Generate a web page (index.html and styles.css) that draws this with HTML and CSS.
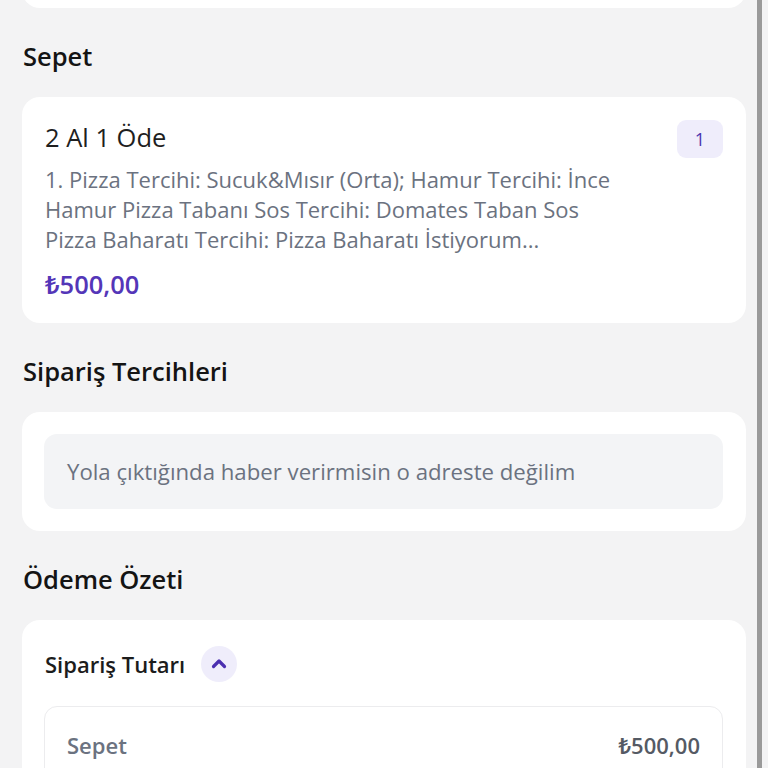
FILE: index.html
```html
<!DOCTYPE html>
<html lang="tr">
<head>
<meta charset="utf-8">
<link rel="stylesheet" href="styles.css">
</head>
<body>
<div class="page">
  <div class="card card-prev"></div>

  <h2 class="section-title">Sepet</h2>
  <div class="card cart-item">
    <div class="item-main">
      <div class="item-title">2 Al 1 Öde</div>
      <div class="item-desc">1. Pizza Tercihi: Sucuk&amp;Mısır (Orta); Hamur Tercihi: İnce Hamur Pizza Tabanı Sos Tercihi: Domates Taban Sos Pizza Baharatı Tercihi: Pizza Baharatı İstiyorum...</div>
      <div class="item-price">₺500,00</div>
    </div>
    <div class="qty-badge">1</div>
  </div>

  <h2 class="section-title">Sipariş Tercihleri</h2>
  <div class="card prefs">
    <div class="note-box">Yola çıktığında haber verirmisin o adreste değilim</div>
  </div>

  <h2 class="section-title">Ödeme Özeti</h2>
  <div class="card summary">
    <div class="summary-head">
      <span class="summary-label">Sipariş Tutarı</span>
      <span class="toggle">
        <svg width="18" height="18" viewBox="0 0 18 18"><path d="M3.5 11.5 L9 6 L14.5 11.5" fill="none" stroke="#4b2fb0" stroke-width="3.2" stroke-linecap="round" stroke-linejoin="round"/></svg>
      </span>
    </div>
    <div class="summary-box">
      <div class="summary-row">
        <span class="row-label">Sepet</span>
        <span class="row-value">₺500,00</span>
      </div>
    </div>
  </div>
</div>
<div class="scroll-edge"></div>
</body>
</html>
```
FILE: styles.css
```css
* { box-sizing: border-box; }
html, body {
  margin: 0;
  padding: 0;
  background: #f3f3f4;
  font-family: "Open Sans", "Noto Sans", sans-serif;
  color: #1c1c1c;
  overflow: hidden;
}
.page {
  padding: 1px 22px 40px;
}
.card {
  background: #ffffff;
  border-radius: 18px;
}
.card-prev {
  height: 48px;
  margin-top: -41px;
}
.section-title {
  margin: 32px 0 25px 1px;
  font-size: 25.5px;
  line-height: 32px;
  font-weight: 600;
  color: #141414;
}
.cart-item {
  display: flex;
  align-items: flex-start;
  gap: 50px;
  padding: 22px 23px 24px 23px;
}
.item-main {
  flex: 1;
  min-width: 0;
}
.item-title {
  font-size: 25.5px;
  line-height: 36px;
  color: #1f1f1f;
}
.item-desc {
  margin-top: 9px;
  font-size: 22px;
  line-height: 30px;
  color: #6b7280;
}
.item-price {
  margin-top: 15px;
  font-size: 25.5px;
  line-height: 30px;
  font-weight: 600;
  color: #5436b8;
}
.qty-badge {
  width: 46px;
  height: 38px;
  margin-top: 1px;
  border-radius: 9px;
  background: #efedfb;
  color: #4b34b0;
  font-size: 18px;
  font-weight: 500;
  display: flex;
  align-items: center;
  justify-content: center;
}
.prefs {
  padding: 22px 23px 22px 22px;
}
.note-box {
  height: 75px;
  border-radius: 13px;
  background: #f3f4f6;
  padding: 0 23px;
  display: flex;
  align-items: center;
  font-size: 22.2px;
  color: #6b7280;
}
.summary {
  padding: 22px 23px 40px 22px;
}
.summary-head {
  display: flex;
  align-items: center;
  gap: 16px;
  height: 44px;
  padding-left: 1px;
}
.summary-label {
  font-size: 22px;
  font-weight: 600;
  color: #1c1c1c;
}
.toggle {
  width: 36px;
  height: 36px;
  border-radius: 50%;
  background: #efedfb;
  display: flex;
  align-items: center;
  justify-content: center;
}
.summary-box {
  margin-top: 20px;
  border: 1px solid #ececee;
  border-radius: 13px;
  padding: 23px 22px;
}
.summary-row {
  display: flex;
  justify-content: space-between;
  align-items: center;
  line-height: 30px;
}
.row-label {
  font-size: 22px;
  font-weight: 600;
  color: #6b7280;
}
.row-value {
  font-size: 22px;
  font-weight: 600;
  color: #555a64;
}
.scroll-edge {
  position: fixed;
  top: 0;
  bottom: 0;
  right: 6px;
  width: 5px;
  background: #9a9a9a;
}
```
